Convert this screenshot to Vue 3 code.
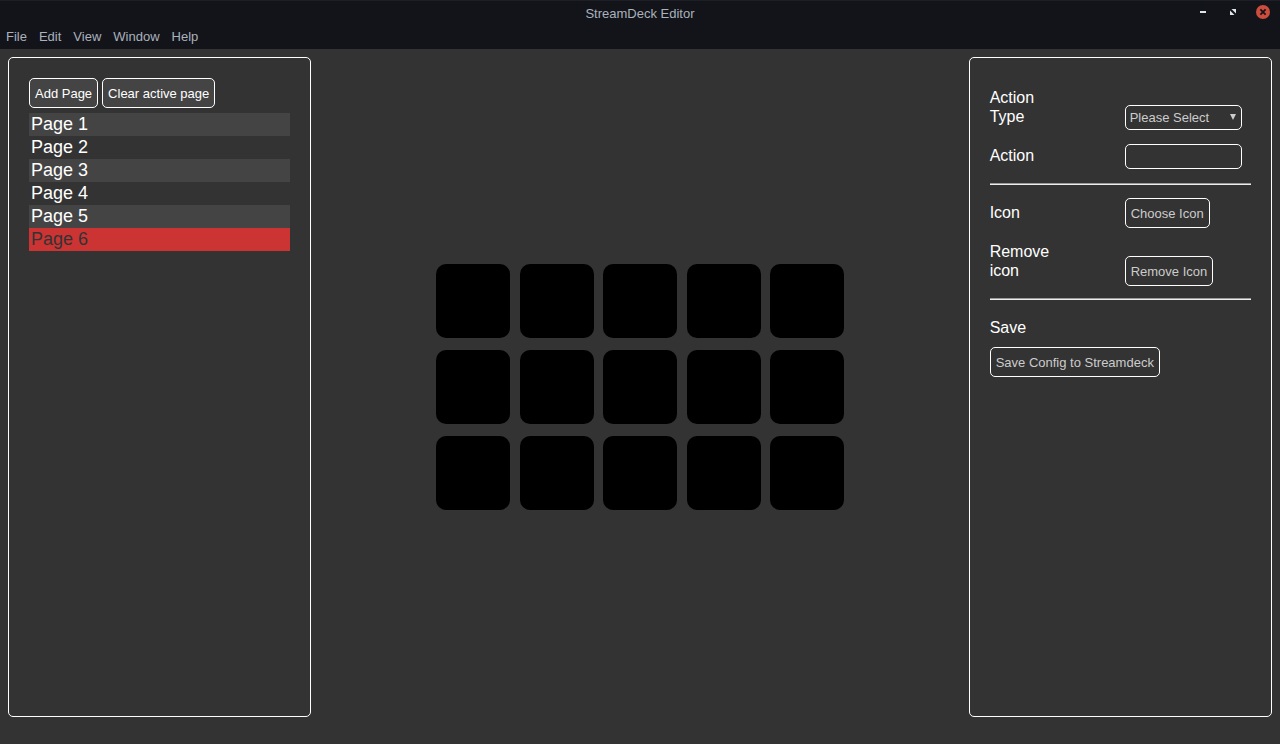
<script setup>
import { ref } from 'vue'

const menus = ['File', 'Edit', 'View', 'Window', 'Help']
const pages = ['Page 1', 'Page 2', 'Page 3', 'Page 4', 'Page 5', 'Page 6']
const activePage = ref(5)
const action = ref('')
</script>

<template>
  <div class="window">
    <header class="chrome">
      <div class="titlebar">
        <h1 class="title">StreamDeck Editor</h1>
        <div class="controls">
          <button class="control" aria-label="Minimize">
            <svg viewBox="0 0 14 14"><rect x="4" y="6" width="6" height="2" fill="#dfe5ec" /></svg>
          </button>
          <button class="control" aria-label="Restore">
            <svg viewBox="0 0 14 14" fill="#dfe5ec">
              <path d="M5.5 4H10v4.5z" />
              <path d="M4 5.5V10h4.5z" />
            </svg>
          </button>
          <button class="control" aria-label="Close">
            <svg viewBox="0 0 14 14">
              <circle cx="7" cy="7" r="7" fill="#cc4d3b" />
              <path d="M4.4 4.4l5.2 5.2M9.6 4.4l-5.2 5.2" stroke="#14151b" stroke-width="1.8" />
            </svg>
          </button>
        </div>
      </div>
      <nav class="menubar">
        <button v-for="menu in menus" :key="menu" class="menu">{{ menu }}</button>
      </nav>
    </header>

    <main class="workspace">
      <section class="panel">
        <div class="toolbar">
          <button class="btn filled">Add Page</button>
          <button class="btn filled">Clear active page</button>
        </div>
        <ul class="pages">
          <li v-for="(page, i) in pages" :key="page">
            <button class="page" :class="{ active: i === activePage }" @click="activePage = i">{{ page }}</button>
          </li>
        </ul>
      </section>

      <section class="stage">
        <div class="deck">
          <button v-for="n in 15" :key="n" class="key" :aria-label="'Key ' + n"></button>
        </div>
      </section>

      <section class="panel settings">
        <div class="row">
          <label for="action-type">Action Type</label>
          <div class="select">
            <select id="action-type" class="field">
              <option>Please Select</option>
            </select>
            <svg class="arrow" viewBox="0 0 6 6"><path d="M0 0h6L3 6z" fill="#ccc" /></svg>
          </div>
        </div>
        <div class="row">
          <label for="action">Action</label>
          <input id="action" v-model="action" class="field" type="text" />
        </div>
        <hr />
        <div class="row tall">
          <label for="choose-icon">Icon</label>
          <button id="choose-icon" class="btn">Choose Icon</button>
        </div>
        <div class="row tall">
          <label for="remove-icon">Remove icon</label>
          <button id="remove-icon" class="btn">Remove Icon</button>
        </div>
        <hr />
        <div class="save">
          <label for="save">Save</label>
          <button id="save" class="btn">Save Config to Streamdeck</button>
        </div>
      </section>
    </main>
  </div>
</template>

<style>
body {
  margin: 0;
  background: #333;
}
</style>

<style scoped>
.window {
  display: flex;
  flex-direction: column;
  min-height: 100vh;
  box-sizing: border-box;
  background: #333;
  color: #fff;
  font: 16px/19px "Liberation Sans", Arial, sans-serif;
}
button,
input,
select {
  box-sizing: border-box;
  margin: 0;
  font-family: inherit;
}
.chrome {
  background: #13141a;
  border-top: 1px solid #1c1f26;
  color: #a9b2bd;
}
.titlebar {
  display: grid;
  grid-template-columns: 1fr auto 1fr;
  align-items: center;
  height: 24px;
}
.title {
  grid-column: 2;
  margin: 0;
  padding-top: 2px;
  font-size: 13px;
  font-weight: 400;
  line-height: 22px;
}
.controls {
  display: flex;
  justify-content: flex-end;
  gap: 16px;
  padding: 0 10px 2px 0;
}
.control {
  width: 14px;
  height: 14px;
  padding: 0;
  border: 0;
  background: none;
}
.control svg {
  display: block;
  width: 14px;
  height: 14px;
}
.menubar {
  display: flex;
  gap: 12px;
  padding: 0 6px;
}
.menu {
  padding: 0;
  border: 0;
  background: none;
  color: inherit;
  font-size: 13px;
  line-height: 24px;
}
.workspace {
  flex: 1;
  display: grid;
  grid-template-columns: 24% 1fr 24%;
  padding: 8px 8px 27px;
}
.panel {
  box-sizing: border-box;
  padding: 20px;
  border: 1px solid #fff;
  border-radius: 5px;
}
.toolbar {
  display: flex;
  gap: 4px;
}
.btn {
  height: 30px;
  padding: 0 5px;
  border: 1px solid #fff;
  border-radius: 5px;
  background: #333;
  color: #ccc;
  font-size: 13px;
  white-space: nowrap;
}
.btn.filled {
  background: #444;
  color: #fff;
}
.pages {
  margin: 5px 0 0;
  padding: 0;
  list-style: none;
}
.page {
  display: block;
  width: 100%;
  padding: 1px 2px;
  border: 0;
  background: #333;
  color: #fff;
  font-size: 18px;
  line-height: 21px;
  text-align: left;
}
.pages li:nth-child(odd) .page {
  background: #444;
}
.pages li .page.active {
  background: #c33;
  color: #333;
}
.stage {
  display: grid;
  place-content: center;
}
.deck {
  display: grid;
  grid-template-columns: repeat(5, 74px);
  justify-content: space-between;
  row-gap: 12px;
  width: 408px;
}
.key {
  height: 74px;
  padding: 0;
  border: 0;
  border-radius: 10px;
  background: #000;
}
.settings {
  padding-top: 30px;
}
.row {
  display: grid;
  grid-template-columns: 75px 1fr;
  column-gap: 60px;
  align-items: end;
  justify-items: start;
  margin-bottom: 14px;
  padding-right: 9px;
}
.row label {
  padding-bottom: 4px;
}
.row.tall {
  margin-bottom: 12px;
}
.row.tall label {
  padding: 2px 0 6px;
}
.select {
  position: relative;
  width: 100%;
}
.field {
  display: block;
  width: 100%;
  height: 25px;
  padding: 0 4px;
  border: 1px solid #fff;
  border-radius: 5px;
  background: #333;
  color: #ccc;
  font-size: 13px;
  appearance: none;
}
.arrow {
  position: absolute;
  top: 9px;
  right: 6px;
  width: 6px;
  height: 6px;
  pointer-events: none;
}
hr {
  width: 100%;
  height: 0;
  margin: 0 0 13px;
  border: 0;
  border-top: 1px solid #9a9a9a;
  border-bottom: 1px solid #eee;
}
.save {
  display: flex;
  flex-direction: column;
  align-items: flex-start;
  gap: 10px;
  padding-top: 5px;
}
</style>
